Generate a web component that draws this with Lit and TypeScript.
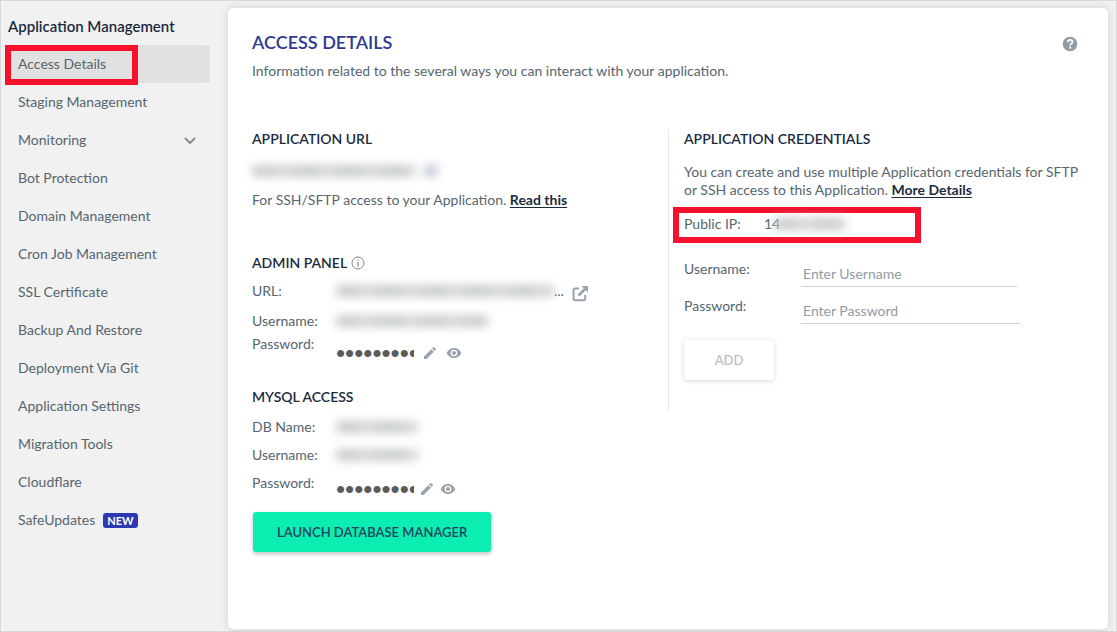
import { LitElement, html, css, svg, nothing } from "lit";
import { customElement } from "lit/decorators.js";
import { classMap } from "lit/directives/class-map.js";

interface NavItem {
  label: string;
  active?: boolean;
  expandable?: boolean;
  badge?: string;
}

const NAV: NavItem[] = [
  { label: "Access Details", active: true },
  { label: "Staging Management" },
  { label: "Monitoring", expandable: true },
  { label: "Bot Protection" },
  { label: "Domain Management" },
  { label: "Cron Job Management" },
  { label: "SSL Certificate" },
  { label: "Backup And Restore" },
  { label: "Deployment Via Git" },
  { label: "Application Settings" },
  { label: "Migration Tools" },
  { label: "Cloudflare" },
  { label: "SafeUpdates", badge: "NEW" },
];

const pencil = svg`<path d="M3 17.25V21h3.75L17.81 9.94l-3.75-3.75L3 17.25zM20.71 7.04a1 1 0 0 0 0-1.41l-2.34-2.34a1 1 0 0 0-1.41 0l-1.83 1.83 3.75 3.75 1.83-1.83z"/>`;
const eye = svg`<path d="M12 4.5C7 4.5 2.73 7.61 1 12c1.73 4.39 6 7.5 11 7.5s9.27-3.11 11-7.5c-1.73-4.39-6-7.5-11-7.5zM12 17a5 5 0 1 1 0-10 5 5 0 0 1 0 10zm0-8a3 3 0 1 0 0 6 3 3 0 0 0 0-6z"/>`;

@customElement("side-nav")
export class SideNav extends LitElement {
  static styles = css`
    :host { display: block; padding: 14px 18px 0 4px; }
    .title { margin: 0 0 8px 3px; font-size: 15px; line-height: 22px; font-weight: 600; color: #1b2b3f; }
    .list { list-style: none; margin: 0; padding: 0; }
    .item { position: relative; }
    .link {
      display: flex; align-items: center; height: 38px; padding: 0 13px; box-sizing: border-box;
      color: #56656f; text-decoration: none; border-radius: 3px;
    }
    .link.active { background: #e1e1e1; }
    .marker { position: absolute; left: 0; top: 0; width: 133px; height: 40px; box-sizing: border-box; border: 6px solid #f5112b; pointer-events: none; }
    .chevron { margin-left: auto; width: 14px; height: 14px; fill: none; stroke: #858d93; stroke-width: 2; }
    .badge { margin-left: 8px; padding: 0 4px; border-radius: 3px; background: #2c39b3; color: #fff; font-size: 11px; line-height: 15px; font-weight: 700; }
  `;
  render() {
    return html`
      <h2 class="title">Application Management</h2>
      <ul class="list">
        ${NAV.map(
          (n) => html`<li class="item">
            <a href="#" class=${classMap({ link: true, active: !!n.active })}>
              ${n.label}
              ${n.badge ? html`<span class="badge">${n.badge}</span>` : nothing}
              ${n.expandable ? html`<svg class="chevron" viewBox="0 0 14 14"><path d="M2 5l5 5 5-5" /></svg>` : nothing}
            </a>
            ${n.active ? html`<span class="marker"></span>` : nothing}
          </li>`
        )}
      </ul>
    `;
  }
}

@customElement("app-root")
export class AppRoot extends LitElement {
  static styles = css`
    :host {
      display: grid; grid-template-columns: 227px minmax(0, 1fr); box-sizing: border-box; min-height: 100vh;
      padding-right: 8px; border: 1px solid #d9d9d9; background: #f1f1f1;
      font-family: Lato, "Liberation Sans", sans-serif; font-size: 14px; line-height: 20px; color: #56656f;
    }
    .card { margin: 7px 0 2px; padding: 22px 24px 24px; background: #fff; border-radius: 5px; box-shadow: 0 0 8px rgba(0, 0, 0, 0.14); }
    .head { display: flex; justify-content: space-between; margin-bottom: 48px; }
    .page-title { margin: 0 0 7px; font-size: 18px; line-height: 24px; font-weight: 600; color: #303a94; }
    .text { margin: 0; }
    .help { width: 16px; height: 16px; margin: 6px 6px 0 0; padding: 0; border: 0; background: none; }
    .columns { display: grid; grid-template-columns: 416px minmax(0, 1fr); align-items: start; }
    .creds { padding: 0 0 30px 15px; border-left: 1px solid #e6e8ea; }
    .section { margin: 0; font-size: 14px; line-height: 20px; font-weight: 600; color: #1b2b3f; display: flex; align-items: center; gap: 4px; }
    .strong { color: #1b2b3f; font-weight: 700; text-decoration: underline; text-underline-offset: 2px; }
    .group { margin-bottom: 43px; }
    .group.admin { margin-bottom: 24px; }
    .row { display: flex; align-items: flex-start; }
    .label { width: 84px; flex: none; }
    .value { display: flex; align-items: center; height: 20px; }
    .value.low { padding-top: 9px; }
    .mysql .value.low { padding-top: 6px; }
    .smudge { display: block; flex: none; height: 12px; border-radius: 4px; filter: blur(5px); background: repeating-linear-gradient(90deg, #c9cccd 0 23px, #d3d6d7 23px 37px, #cdd0d1 37px 44px); }
    .site { width: 164px; }
    .site-icon { width: 14px; margin-left: 8px; background: #c3c9dc; }
    .long { width: 218px; }
    .mail { width: 152px; }
    .db { width: 82px; }
    .ip { width: 72px; margin-left: -6px; }
    .url-line { display: flex; align-items: center; height: 20px; margin: 12px 0 9px; }
    .gap-9 { margin-top: 10px; }
    .gap-8 { margin-top: 8px; }
    .gap-3 { margin-top: 3px; }
    .secret {
      width: 78px; height: 20px; padding: 0; border: 0; outline: 0; background: none; color: #5b5b5b;
      font-family: "Liberation Sans", sans-serif; font-size: 26px; line-height: 20px;
    }
    .icon-btn { display: flex; padding: 0; border: 0; background: none; fill: #98a2ac; }
    .icon-btn + .icon-btn { margin-left: 8px; }
    .secret + .icon-btn { margin-left: 8px; }
    .mysql .secret + .icon-btn { margin-left: 5px; }
    .mysql .icon-btn + .icon-btn { margin-left: 5px; }
    .glyph { width: 16px; height: 16px; }
    .open { margin: 5px 0 0 8px; }
    .primary {
      margin-top: 13px; margin-left: 1px; height: 40px; padding: 0 24px; border: 0; border-radius: 3px; background: #0bedb1; color: #204562;
      font: 600 13px/20px Lato, sans-serif; box-shadow: 0 2px 4px rgba(0, 0, 0, 0.25);
    }
    .para { margin: 14px 0 0; line-height: 18px; }
    .public { display: flex; align-items: center; width: 248px; height: 36px; box-sizing: border-box; margin: 8px 0 16px -11px; padding: 0 0 2px 5px; border: 6px solid #f5112b; }
    .public .label { width: 80px; }
    .field { display: flex; align-items: flex-start; height: 37px; }
    .field-label { width: 117px; flex: none; }
    .input {
      width: 216px; height: 28px; box-sizing: border-box; padding: 4px 2px 3px; border: 0; border-bottom: 1px solid #cfd3d6; border-radius: 0; background: none;
      font: 14px/20px Lato, sans-serif; color: #56656f; outline: 0;
    }
    .input.wide { width: 220px; }
    .input::placeholder { color: #929ba2; opacity: 1; }
    .add { width: 90px; height: 40px; margin-top: 7px; border: 0; border-radius: 3px; background: #fff; color: #bcc1c8; font: 600 13px/20px Lato, sans-serif; box-shadow: 0 1px 5px rgba(0, 0, 0, 0.16); }
  `;

  private secret(id: string) {
    return html`
      <input class="secret" id=${id} type="password" value="0000000000" readonly />
      <button class="icon-btn" aria-label="Edit password"><svg class="glyph" viewBox="0 0 24 24">${pencil}</svg></button>
      <button class="icon-btn" aria-label="Show password"><svg class="glyph" viewBox="0 0 24 24">${eye}</svg></button>
    `;
  }

  render() {
    return html`
      <side-nav></side-nav>
      <main class="card">
        <header class="head">
          <div>
            <h1 class="page-title">ACCESS DETAILS</h1>
            <p class="text">Information related to the several ways you can interact with your application.</p>
          </div>
          <button class="help" aria-label="Help">
            <svg width="16" height="16" viewBox="0 0 16 16">
              <circle cx="8" cy="8" r="7.3" fill="#919ca7" />
              <path d="M5.6 6.2c.1-1.500 1.100-2.300 2.500-2.300 1.300 0 2.300.8 2.300 2 0 1.700-2.200 1.700-2.200 3.500" fill="none" stroke="#fff" stroke-width="1.700" />
              <circle cx="8.200" cy="11.700" r="1.100" fill="#fff" />
            </svg>
          </button>
        </header>
        <div class="columns">
          <div>
            <section class="group">
              <h3 class="section">APPLICATION URL</h3>
              <div class="url-line"><span class="smudge site"></span><span class="smudge site-icon"></span></div>
              <p class="text">For SSH/SFTP access to your Application. <a class="strong" href="#">Read this</a></p>
            </section>
            <section class="group admin">
              <h3 class="section">ADMIN PANEL
                <svg width="14" height="14" viewBox="0 0 14 14" fill="none" stroke="#7d8891"><circle cx="7" cy="7" r="6" /><path d="M7 6v4.500M7 3.500v1.300" stroke-width="1.300" /></svg>
              </h3>
              <div class="row gap-8">
                <span class="label">URL:</span>
                <div class="value"><span class="smudge long"></span><span>...</span>
                  <button class="icon-btn open" aria-label="Open admin panel">
                    <svg width="17" height="17" viewBox="0 0 17 17" fill="none" stroke="#98a2ac" stroke-width="2">
                      <path d="M7 3.500H3.200Q1.500 3.500 1.500 5.200v8.300q0 1.700 1.700 1.700h8.300q1.700 0 1.700-1.700V10" />
                      <path d="M6.500 10.500L13 4" stroke-width="2.600" /><path d="M9.500 1H16v6.500z" fill="#98a2ac" stroke="none" />
                    </svg>
                  </button>
                </div>
              </div>
              <div class="row gap-9">
                <span class="label">Username:</span>
                <div class="value"><span class="smudge mail"></span></div>
              </div>
              <div class="row gap-3">
                <label class="label" for="admin-pass">Password:</label>
                <div class="value low">${this.secret("admin-pass")}</div>
              </div>
            </section>
            <section class="mysql">
              <h3 class="section">MYSQL ACCESS</h3>
              <div class="row gap-9"><span class="label">DB Name:</span><div class="value"><span class="smudge db"></span></div></div>
              <div class="row gap-8"><span class="label">Username:</span><div class="value"><span class="smudge db"></span></div></div>
              <div class="row gap-8"><label class="label" for="db-pass">Password:</label><div class="value low">${this.secret("db-pass")}</div></div>
              <button class="primary">LAUNCH DATABASE MANAGER</button>
            </section>
          </div>
          <section class="creds">
            <h3 class="section">APPLICATION CREDENTIALS</h3>
            <p class="para">You can create and use multiple Application credentials for SFTP or SSH access to this Application. <a class="strong" href="#">More Details</a></p>
            <div class="public"><span class="label">Public IP:</span><span>14</span><span class="smudge ip"></span></div>
            <div class="field"><label class="field-label" for="user">Username:</label><input class="input" id="user" placeholder="Enter Username" /></div>
            <div class="field"><label class="field-label" for="pass">Password:</label><input class="input wide" id="pass" type="password" placeholder="Enter Password" /></div>
            <button class="add" disabled>ADD</button>
          </section>
        </div>
      </main>
    `;
  }
}
